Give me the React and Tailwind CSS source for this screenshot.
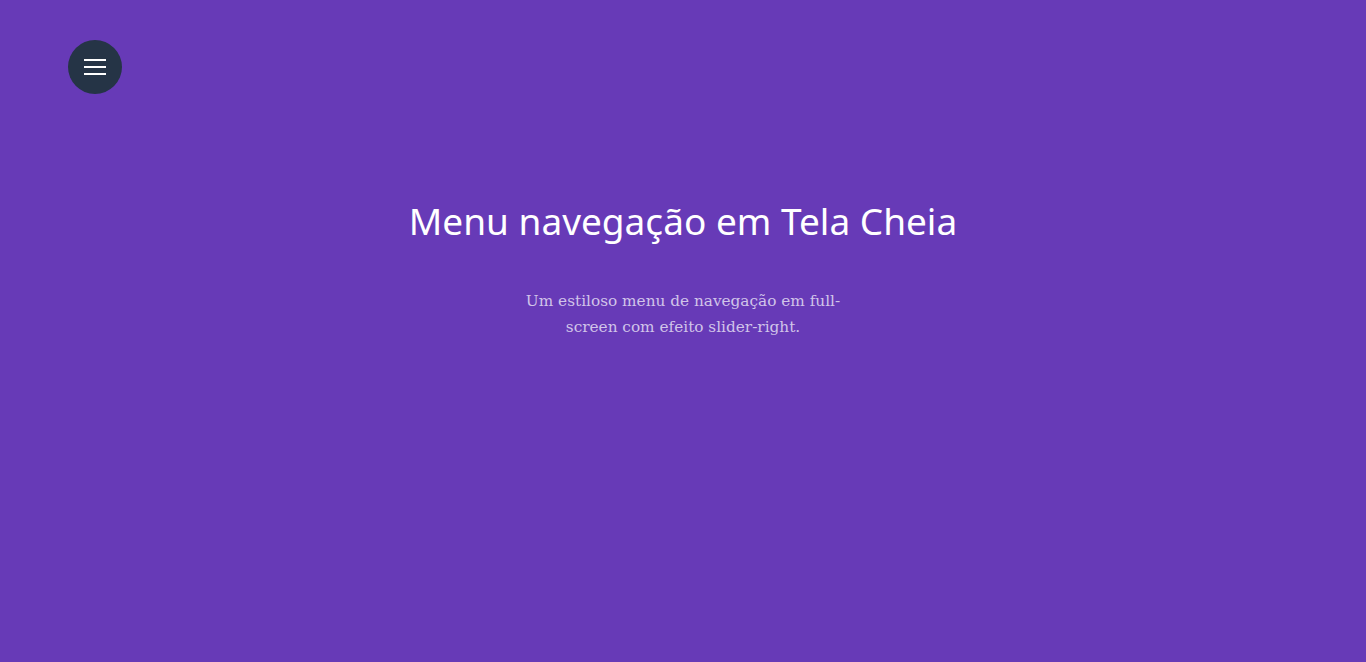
export default function App() {
  return (
    <div className="min-h-[662px] w-full bg-[#673ab7] relative">
      <div className="px-[68px] pt-[40px]">
        <button className="w-[54px] h-[54px] rounded-full bg-[#253446] flex flex-col items-center justify-center gap-[5px]">
          <span className="block w-[22px] h-[2px] bg-white"></span>
          <span className="block w-[22px] h-[2px] bg-white"></span>
          <span className="block w-[22px] h-[2px] bg-white"></span>
        </button>
      </div>
      <div className="flex flex-col items-center pt-[100px]">
        <h1 className="text-white text-[37px] leading-[54px] font-['Noto_Sans',sans-serif]">Menu navegação em Tela Cheia</h1>
        <p className="mt-[40px] w-[322px] text-center text-[#d1c4e9] text-[15.3px] leading-[26px] font-['DejaVu_Serif',serif]">Um estiloso menu de navegação em full-screen com efeito slider-right.</p>
      </div>
    </div>
  );
}
